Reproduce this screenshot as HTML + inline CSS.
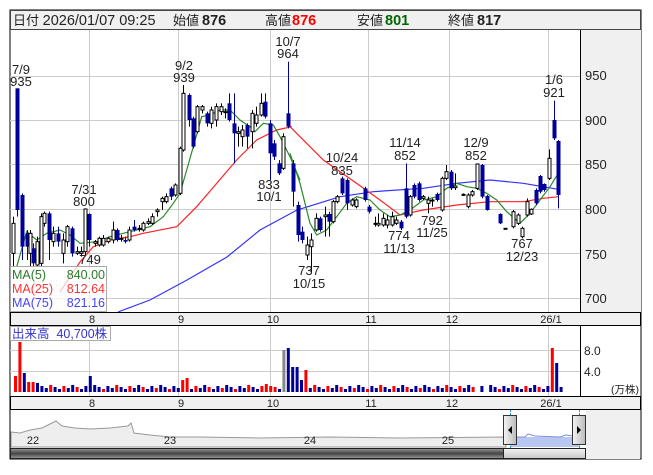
<!DOCTYPE html>
<html><head><meta charset="utf-8"><style>
body{margin:0;background:#fff;width:653px;height:470px;overflow:hidden;font-family:"Liberation Sans","Noto Sans CJK JP",sans-serif}
svg text{font-family:"Liberation Sans","Noto Sans CJK JP",sans-serif}
</style></head><body>
<svg id="s" width="653" height="470" xmlns="http://www.w3.org/2000/svg">
<rect x="10" y="10" width="631" height="449" fill="#fff" stroke="#000"/>
<rect x="10.5" y="10.5" width="630" height="19" fill="#f0f0f0" stroke="#444"/>
<g font-size="13" fill="#222">
<text x="13" y="25"><tspan>日付 </tspan><tspan font-size="14.5">2026/01/07 09:25</tspan></text>
<text x="173" y="25">始値</text><text x="202" y="25" font-weight="bold" font-size="14.5">876</text>
<text x="265" y="25">高値</text><text x="292" y="25" font-weight="bold" font-size="14.5" fill="#f00">876</text>
<text x="357" y="25">安値</text><text x="385" y="25" font-weight="bold" font-size="14.5" fill="#060">801</text>
<text x="448" y="25">終値</text><text x="477" y="25" font-weight="bold" font-size="14.5">817</text>
</g>
<rect x="580" y="30" width="61" height="282" fill="#f0f0f0"/>
<line x1="580.5" y1="30" x2="580.5" y2="312" stroke="#000"/>
<g stroke="#ccc" id="grid"></g>
<g id="ma"></g>
<g id="cd"></g>
<g font-size="13" fill="#222" text-anchor="middle">
<text x="21" y="74">7/9</text><text x="21" y="86">935</text>
<text x="184" y="70">9/2</text><text x="184" y="82">939</text>
<text x="288" y="46">10/7</text><text x="288" y="58">964</text>
<text x="84" y="194">7/31</text><text x="84" y="206">800</text>
<text x="90" y="264">749</text>
<text x="269" y="189">833</text><text x="269" y="201">10/1</text>
<text x="309" y="275">737</text><text x="309" y="288">10/15</text>
<text x="342" y="162">10/24</text><text x="342" y="175">835</text>
<text x="405" y="147">11/14</text><text x="405" y="160">852</text>
<text x="476" y="147">12/9</text><text x="476" y="160">852</text>
<text x="432" y="225">792</text><text x="432" y="237">11/25</text>
<text x="399" y="240">774</text><text x="399" y="253">11/13</text>
<text x="522" y="248">767</text><text x="522" y="261">12/23</text>
<text x="554" y="84">1/6</text><text x="554" y="97">921</text>
</g>
<g font-size="13" fill="#222">
<text x="585" y="80">950</text><text x="585" y="125">900</text><text x="585" y="169">850</text><text x="585" y="214">800</text><text x="585" y="259">750</text><text x="585" y="303">700</text>
</g>
<rect x="10.5" y="266.5" width="96" height="45" fill="#fff" fill-opacity="0.75" stroke="#aaa"/>
<g font-size="12.5"><text x="12" y="279" fill="#2a7a2a">MA(5)</text><text x="105" y="279" fill="#2a7a2a" text-anchor="end">840.00</text>
<text x="12" y="293" fill="#f33">MA(25)</text><text x="105" y="293" fill="#f33" text-anchor="end">812.64</text>
<text x="12" y="307" fill="#44f">MA(75)</text><text x="105" y="307" fill="#44f" text-anchor="end">821.16</text></g>
<rect x="10.5" y="312.5" width="630" height="13" fill="#f0f0f0" stroke="#000"/>
<g font-size="11" fill="#222" text-anchor="middle" id="xl1"></g>
<line x1="580.5" y1="326" x2="580.5" y2="396" stroke="#000"/>
<g stroke="#ccc" id="vgrid"></g>
<g id="vol"></g>
<rect x="10.5" y="326.5" width="100" height="14" fill="#fff" stroke="#aaa"/>
<text x="12" y="338" font-size="12.5" fill="#33c">出来高 &#160;40,700株</text>
<g font-size="12" fill="#222"><text x="584" y="355">8.0</text><text x="584" y="376">4.0</text><text x="611" y="393" font-size="10.5">(万株)</text></g>
<rect x="10.5" y="396.5" width="630" height="13" fill="#f0f0f0" stroke="#000"/>
<g font-size="11" fill="#222" text-anchor="middle" id="xl2"></g>
<rect x="586" y="410" width="54" height="49" fill="#f0f0f0"/>
<path d="M11,432 L20,433 L30,430 L42,428 L50,424 L56,421 L62,426 L75,428 L90,429 L110,428 L128,426 L131,423 L134,433 L150,435 L170,437 L200,437 L260,438 L330,437 L400,438 L506,437 L506,447 L11,447Z" fill="#eeeeee" stroke="#999" stroke-width="1"/>
<rect x="510" y="437" width="70" height="10" fill="#b8c6f2"/>
<path d="M510,437 L525,437 L528,434 L535,436 L560,437 L566,435 L580,437" fill="none" stroke="#8090d0"/>
<line x1="510.5" y1="410" x2="510.5" y2="448" stroke="#29c" stroke-dasharray="2,1"/>
<line x1="579.5" y1="410" x2="579.5" y2="448" stroke="#29c" stroke-dasharray="2,1"/>
<g font-size="11" fill="#222" text-anchor="middle"><text x="33" y="444">22</text><text x="170" y="444">23</text><text x="310" y="444">24</text><text x="448" y="444">25</text></g>
<defs><linearGradient id="hg" x1="0" x2="1"><stop offset="0" stop-color="#f4f4f4"/><stop offset="1" stop-color="#bbb"/></linearGradient>
<linearGradient id="sg" x1="0" y1="0" x2="0" y2="1"><stop offset="0" stop-color="#999"/><stop offset="0.5" stop-color="#444"/><stop offset="1" stop-color="#999"/></linearGradient>
<linearGradient id="tg" x1="0" y1="0" x2="0" y2="1"><stop offset="0" stop-color="#f4f4f4"/><stop offset="1" stop-color="#c8c8c8"/></linearGradient></defs>
<rect x="503.5" y="415.5" width="13" height="29" fill="url(#hg)" stroke="#333"/>
<path d="M508,430 L512,426 L512,434Z" fill="#000"/>
<rect x="572.5" y="415.5" width="13" height="29" fill="url(#hg)" stroke="#333"/>
<path d="M581,430 L577,426 L577,434Z" fill="#000"/>
<rect x="10.5" y="448.5" width="493" height="10" fill="url(#sg)" stroke="#222"/>
<rect x="503.5" y="448.5" width="82" height="10" fill="url(#tg)" stroke="#222"/>
</svg>
<script>
var NS="http://www.w3.org/2000/svg";
function el(p,t,a){var e=document.createElementNS(NS,t);for(var k in a)e.setAttribute(k,a[k]);document.getElementById(p).appendChild(e);return e;}
var gx=[89,178,270,368,449,548];
gx.forEach(function(x){el("grid","line",{x1:x+.5,y1:30,x2:x+.5,y2:312});el("vgrid","line",{x1:x+.5,y1:326,x2:x+.5,y2:396});});
[76,120,164,209,253,298].forEach(function(y){el("grid","line",{x1:10,y1:y+.5,x2:580,y2:y+.5});});
[350,371].forEach(function(y){el("vgrid","line",{x1:10,y1:y+.5,x2:580,y2:y+.5});});
var lab=["8","9","10","11","12","26/1"];
gx.forEach(function(x,i){var t=el("xl1","text",{x:x+3,y:323});t.textContent=lab[i];var t2=el("xl2","text",{x:x+3,y:407});t2.textContent=lab[i];});
function pl(pts,ox,oy,col,sx){var s=pts.map(function(p){return (ox+p[0]/3).toFixed(1)+","+(oy+p[1]/3).toFixed(1)}).join(" ");el("ma","polyline",{points:s,fill:"none",stroke:col,"stroke-width":1.2});}
el("ma","polyline",{points:"118,312 150,300 187,280 227,257 260,230 297,210 "+[[150,410],[250,395],[400,385],[500,370],[600,360],[700,370],[805,388]].map(function(p){return (290+p[0]/3)+","+(60+p[1]/3)}).join(" "),fill:"none",stroke:"#33f","stroke-width":1.2});
el("ma","polyline",{points:"60,292 80,262 93,247 "+[[300,540],[360,530],[400,520],[500,500],[560,440],[620,370],[680,300],[740,240],[800,210],[845,200]].map(function(p){return (10+p[0]/3)+","+(60+p[1]/3)}).join(" ")+" "+[[0,200],[100,300],[200,370],[270,420],[330,465],[400,450],[500,435],[600,425],[700,425],[760,415],[805,410]].map(function(p){return (290+p[0]/3)+","+(60+p[1]/3)}).join(" "),fill:"none",stroke:"#f22","stroke-width":1.2});
pl([[20,620],[50,515],[80,540],[110,520],[150,510],[180,525],[210,550],[260,545],[300,530],[340,520],[380,510],[420,500],[460,470],[490,430],[510,400],[530,330],[550,260],[575,170],[600,165],[630,150],[660,150],[690,180],[720,200],[735,215],[760,190],[790,195],[810,230],[840,290],[870,360]],10,60,"#2a8a2a");
pl([[0,280],[30,370],[60,490],[80,525],[110,510],[140,470],[170,430],[200,410],[240,420],[270,450],[300,470],[330,465],[360,450],[400,420],[440,410],[470,385],[500,370],[530,380],[560,385],[590,400],[620,420],[650,455],[690,490],[720,460],[750,420],[780,380],[805,340]],290,60,"#2a8a2a");
var A=[[10,"w",490,580,470,620],[22,"b",85,450,85,470],[37,"b",405,560,400,600],[50,"b",520,560,510,600],[60,"w",520,580,510,620],[68,"b",565,610,550,620],[80,"w",545,615,530,620],[92,"w",470,610,460,620],[103,"w",460,490,455,500],[117,"b",460,540,455,600],[130,"w",520,545,500,560],[145,"b",520,545,500,560],[160,"w",540,580,520,610],[172,"w",500,545,495,560],[187,"b",505,580,500,590],[200,"w",575,580,560,585],[212,"w",575,580,560,590],[226,"w",447,575,445,585],[238,"b",462,540,460,560],[255,"w",545,550,540,560],[267,"w",535,555,530,560],[280,"w",535,555,525,560],[295,"w",535,545,530,550],[308,"w",510,540,485,550],[320,"b",510,540,505,545],[333,"w",535,538,525,545],[345,"b",540,545,530,550],[357,"w",510,540,500,545],[373,"b",500,510,480,515],[387,"w",505,508,495,515],[400,"w",490,510,485,515],[414,"w",485,490,475,495],[427,"w",470,490,460,495],[440,"w",450,455,445,470],[455,"w",415,425,410,450],[467,"w",410,425,400,430],[482,"b",385,410,380,420],[495,"w",375,405,370,410],[510,"w",265,400,260,405],[520,"w",100,270,75,275],[537,"b",105,180,100,200],[548,"b",175,260,170,265],[562,"w",140,215,135,220],[575,"w",140,150,135,160],[590,"b",160,190,155,200],[603,"w",150,190,140,205],[618,"w",140,180,130,200],[632,"w",140,155,130,165],[645,"w",155,158,145,175],[658,"b",130,180,100,185],[672,"b",190,220,100,310],[685,"w",215,220,200,260],[697,"w",210,230,195,260],[710,"b",195,230,190,265],[725,"w",160,215,150,265],[738,"w",165,190,140,200],[752,"w",130,165,100,170],[765,"b",125,170,100,175],[780,"b",190,280,180,360],[792,"b",250,290,240,300],[806,"b",310,340,300,345],[820,"w",230,325,220,330],[833,"b",160,200,5,205],[850,"b",310,395,300,440],[865,"b",435,525,425,545]];
var B=[[35,"b",515,540,500,550],[50,"w",555,585,530,600],[62,"w",540,560,520,640],[77,"w",475,510,460,515],[90,"b",475,510,470,515],[105,"w",465,470,440,530],[118,"b",462,485,455,530],[130,"w",425,485,420,490],[140,"w",410,425,405,430],[157,"b",355,400,350,405],[170,"b",360,430,355,450],[185,"w",420,435,415,440],[198,"w",420,440,415,445],[225,"b",385,420,380,425],[238,"b",440,455,435,460],[255,"w",490,493,470,500],[265,"w",490,495,460,500],[278,"w",475,495,460,500],[292,"w",480,495,465,505],[305,"w",470,495,455,500],[318,"w",480,490,470,495],[332,"b",485,505,480,510],[347,"b",385,470,310,475],[360,"w",410,465,405,470],[373,"b",375,410,370,415],[387,"b",370,420,365,425],[400,"w",410,415,405,420],[413,"w",420,430,410,460],[425,"w",420,422,415,440],[440,"b",402,420,398,425],[455,"w",355,450,350,455],[468,"w",335,355,315,360],[482,"b",335,385,330,390],[495,"w",378,383,340,390],[520,"w",403,405,400,408],[535,"w",405,440,400,445],[547,"w",395,405,390,410],[562,"w",312,385,310,390],[575,"b",315,410,312,415],[590,"b",408,450,405,452],[630,"b",462,490,460,492],[645,"w",505,506,505,506],[670,"w",455,500,450,505],[685,"w",465,490,460,495],[697,"w",505,530,500,535],[710,"w",425,465,415,470],[723,"w",448,462,445,465],[737,"b",390,430,385,435],[750,"b",348,395,345,400],[763,"b",372,390,370,395],[778,"w",295,355,268,360],[792,"b",180,235,122,240],[805,"b",243,405,240,445]];
function draw(arr,ox){arr.forEach(function(c){var x=Math.round(ox+c[0]/3),t=60+c[2]/3,b=60+c[3]/3,wt=60+c[4]/3,wb=60+c[5]/3;
var col=c[1]=="b"?"#000099":"#000";
el("cd","line",{x1:x+.5,y1:wt,x2:x+.5,y2:wb,stroke:col});
var h=Math.max(1,b-t);
if(c[1]=="b")el("cd","rect",{x:x-1.5,y:t,width:4,height:h,fill:"#000099"});
else el("cd","rect",{x:x-1,y:t,width:3,height:h,fill:"#fff",stroke:"#000"});});}
draw(A,10);draw(B,290);
var base=392,n=125;
var ov={0:["r",16],1:["r",50],2:["b",19],3:["r",10],4:["r",10],5:["b",9],17:["b",16],38:["r",12],39:["r",14],57:["r",8],58:["r",6],61:["g",42],62:["b",44],63:["b",25],64:["b",25],65:["b",12],66:["r",22],122:["r",44],123:["b",29]};
var cols=["b","r","b","b","r","g","b","r","r","b","b","r","g","b","r","b","r","r","b","b","g"];
for(var i=0;i<n;i++){var x=14+i*4.4;var c=cols[(i*7+3)%cols.length],h=3+((i*13)%5);
if(ov[i]){c=ov[i][0];h=ov[i][1];}
if(i>=104&&i<=108&&!ov[i]&&i%2)continue;
el("vol","rect",{x:x.toFixed(1),y:base-h,width:3,height:h,fill:c=="r"?"#f00":c=="b"?"#000099":"#888"});}
</script>
</body></html>
